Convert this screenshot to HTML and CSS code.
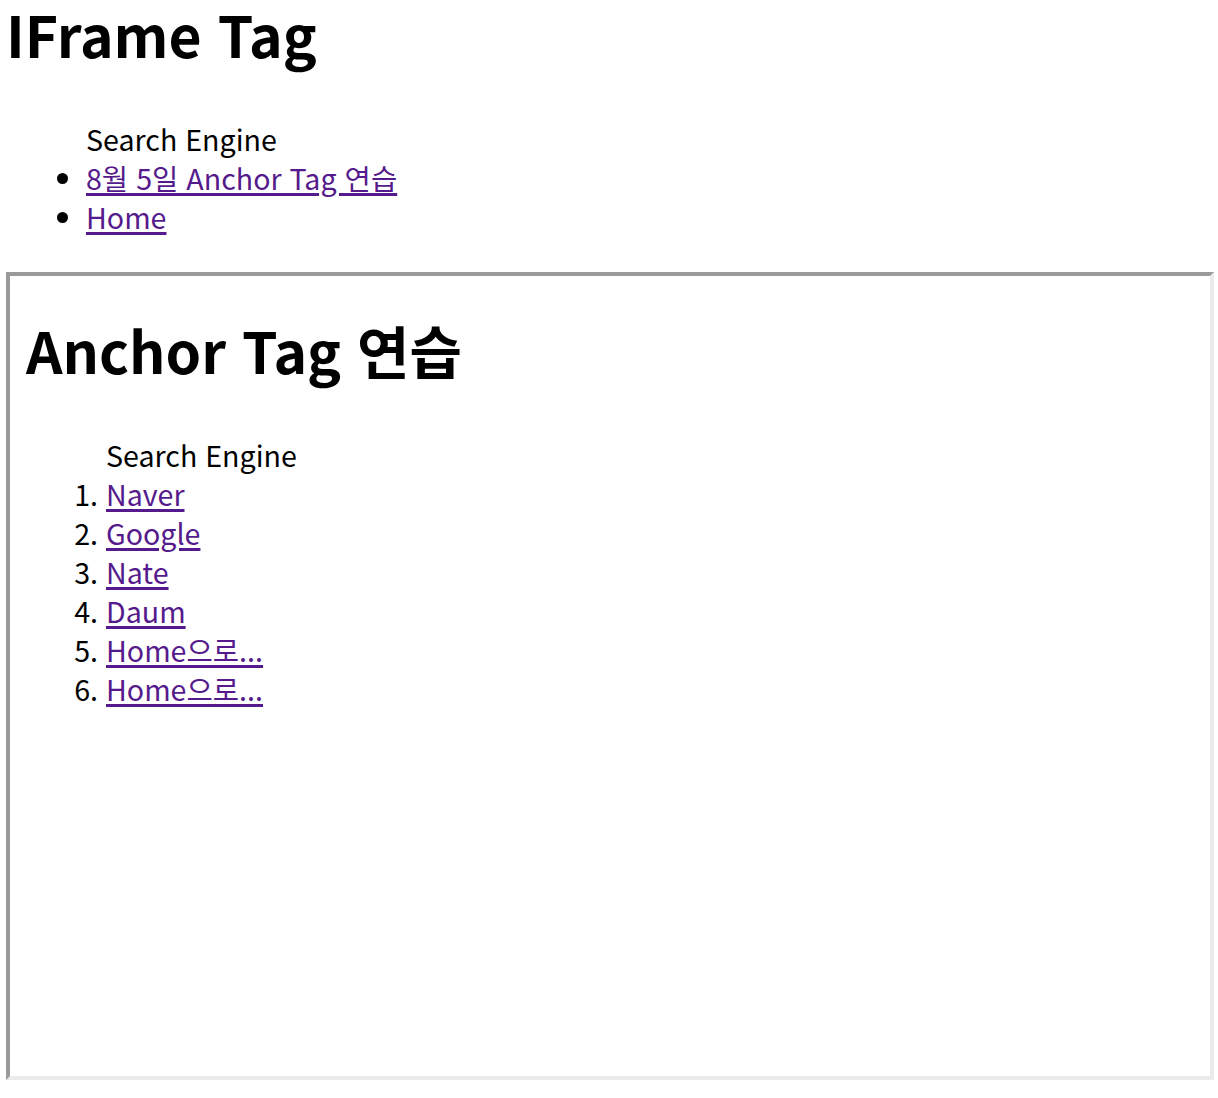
FILE: index.html
```html
<!DOCTYPE html>
<html lang="ko">
<head>
<meta charset="utf-8">
<title>IFrame Tag</title>
<link rel="stylesheet" href="styles.css">
</head>
<body>
<h1 class="title">IFrame Tag</h1>
<ul class="list">Search Engine
  <li><a class="link" href="#">8월 5일 Anchor Tag 연습</a></li>
  <li><a class="link" href="#">Home</a></li>
</ul>
<div class="frame">
  <h1 class="title">Anchor Tag 연습</h1>
  <ol class="list">Search Engine
    <li><a class="link" href="#">Naver</a></li>
    <li><a class="link" href="#">Google</a></li>
    <li><a class="link" href="#">Nate</a></li>
    <li><a class="link" href="#">Daum</a></li>
    <li><a class="link" href="#">Home으로...</a></li>
    <li><a class="link" href="#">Home으로...</a></li>
  </ol>
</div>
</body>
</html>
```
FILE: styles.css
```css
html, body {
  background: #ffffff;
}
body {
  margin: 0;
  padding: 1px 4px 0 6px;
  font-family: "Noto Sans CJK KR", "Noto Sans", sans-serif;
  font-size: 28.6px;
  line-height: 39px;
  color: #000000;
}
.title {
  margin: 0;
  font-size: 57px;
  line-height: 64px;
  font-weight: bold;
}
.list {
  margin: 54px 0 0 0;
  padding: 0 0 0 80px;
}
.link {
  color: #551a8b;
  text-decoration: underline;
  text-decoration-thickness: 3px;
  text-underline-offset: 3px;
}
.frame {
  margin-top: 36px;
  border-style: solid;
  border-width: 4px;
  border-color: #9a9a9a #ebebeb #ebebeb #9a9a9a;
  padding: 41px 16px 0 16px;
  box-sizing: border-box;
  height: 808px;
}
```
